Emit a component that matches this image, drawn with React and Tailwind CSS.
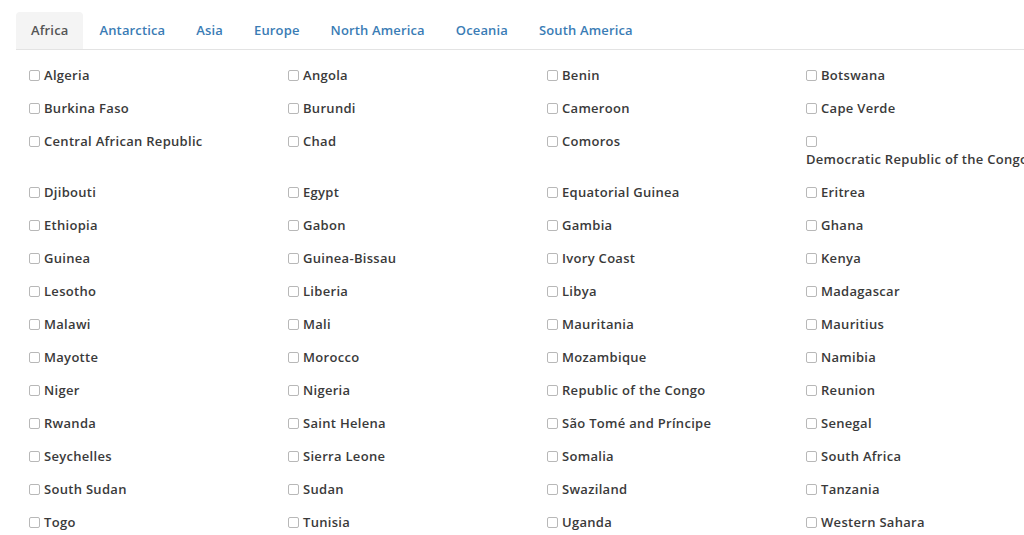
import React from "react";

const tabs = ["Africa", "Antarctica", "Asia", "Europe", "North America", "Oceania", "South America"];

const countries = [
  "Algeria", "Angola", "Benin", "Botswana",
  "Burkina Faso", "Burundi", "Cameroon", "Cape Verde",
  "Central African Republic", "Chad", "Comoros", "Democratic Republic of the Congo",
  "Djibouti", "Egypt", "Equatorial Guinea", "Eritrea",
  "Ethiopia", "Gabon", "Gambia", "Ghana",
  "Guinea", "Guinea-Bissau", "Ivory Coast", "Kenya",
  "Lesotho", "Liberia", "Libya", "Madagascar",
  "Malawi", "Mali", "Mauritania", "Mauritius",
  "Mayotte", "Morocco", "Mozambique", "Namibia",
  "Niger", "Nigeria", "Republic of the Congo", "Reunion",
  "Rwanda", "Saint Helena", "São Tomé and Príncipe", "Senegal",
  "Seychelles", "Sierra Leone", "Somalia", "South Africa",
  "South Sudan", "Sudan", "Swaziland", "Tanzania",
  "Togo", "Tunisia", "Uganda", "Western Sahara",
];

function Box() {
  return <span className="inline-block w-[11px] h-[11px] border border-[#b8b8b8] rounded-[2px] bg-white shrink-0" />;
}

export default function App() {
  return (
    <div
      className="w-[1024px] h-[535px] overflow-hidden bg-white text-[#3a3a3a] text-[13px]"
      style={{ fontFamily: '"Open Sans", "Liberation Sans", sans-serif' }}
    >
      <div className="pt-[12px] pl-[16px]">
        <div className="flex gap-[1px] border-b border-[#e3e3e3] h-[38px] tracking-[0.15px]">
          {tabs.map((t, i) => (
            <div
              key={t}
              className={
                "h-[37px] px-[15px] flex items-center rounded-t-[4px] font-semibold " +
                (i === 0 ? "bg-[#f4f4f4] text-[#555]" : "text-[#3a7cb5]")
              }
            >
              {t}
            </div>
          ))}
        </div>
      </div>
      <div className="grid grid-cols-[259px_259px_259px_259px] gap-y-[15px] pl-[29px] pt-[16px] whitespace-nowrap tracking-[0.3px]">
        {countries.map((c) =>
          c === "Democratic Republic of the Congo" ? (
            <div key={c} className="leading-[18px]">
              <div className="h-[18px] flex items-center">
                <Box />
              </div>
              <div className="font-semibold">{c}</div>
            </div>
          ) : (
            <div key={c} className="h-[18px] leading-[18px] flex items-center gap-[4px] font-semibold">
              <Box />
              <span>{c}</span>
            </div>
          )
        )}
      </div>
    </div>
  );
}
